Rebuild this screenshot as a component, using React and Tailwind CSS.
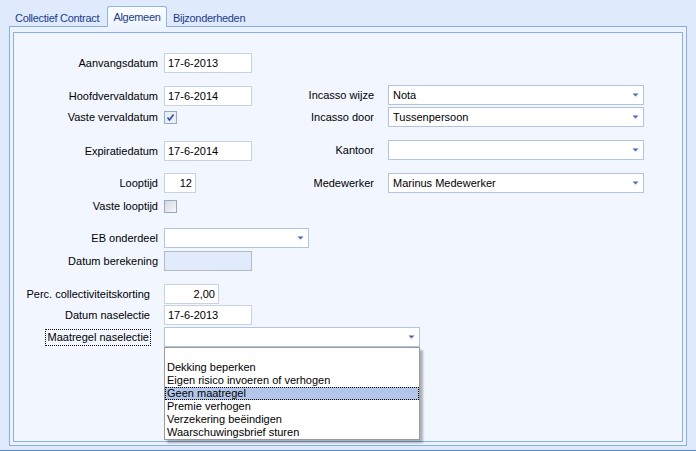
import React from "react";

const Arrow = () => (
  <svg width="7" height="5" viewBox="0 0 7 5" className="absolute right-[4px] top-1/2 -translate-y-1/2">
    <path d="M0.5 1 H6.5 L3.5 4 Z" fill="#4a6bb4" />
    <path d="M2 4.5 H5" stroke="#e6d6f0" strokeWidth="1" />
  </svg>
);

const TextBox = ({ value = "", w = "w-[88px]", right = false, disabled = false }) => (
  <div
    className={`${w} h-[20px] flex items-center px-[3px] border ${
      disabled ? "bg-[#e1ebfb] border-[#b3bac6]" : "bg-white border-[#c6d3e3]"
    } ${right ? "justify-end" : ""}`}
  >
    {value}
  </div>
);

const Combo = ({ value = "", w = "w-[256px]", children }) => (
  <div className={`${w} h-[20px] relative flex items-center pl-[4px] bg-white border border-[#b2c5de]`}>
    {value}
    <Arrow />
    {children}
  </div>
);

const Check = ({ checked }) => (
  <div
    className={`w-[13px] h-[13px] border border-[#95abc9] ${
      checked ? "bg-[#e9eef6]" : "bg-gradient-to-br from-[#d4d8de] to-[#f7f8fa]"
    } flex items-center justify-center`}
  >
    {checked && (
      <svg width="9" height="9" viewBox="0 0 9 9">
        <path d="M1.5 4.5 L3.5 7 L7.5 1.5" fill="none" stroke="#2f4f9e" strokeWidth="1.6" />
      </svg>
    )}
  </div>
);

const Row = ({ label, children, labelW = "w-[144px]", pr = "", gap = "ml-[6px]", mt = "" }) => (
  <div className={`flex items-center h-[20px] ${mt}`}>
    <div className={`${labelW} ${pr} text-right whitespace-nowrap shrink-0`}>{label}</div>
    <div className={gap}>{children}</div>
  </div>
);

const RightRow = ({ label, value, mt = "" }) => (
  <Row label={label} labelW="w-[74px]" gap="ml-[14px]" mt={mt}>
    <Combo value={value} w="w-[256px]" />
  </Row>
);

const options = [
  "",
  "Dekking beperken",
  "Eigen risico invoeren of verhogen",
  "Geen maatregel",
  "Premie verhogen",
  "Verzekering beëindigen",
  "Waarschuwingsbrief sturen",
];

export default function App() {
  return (
    <div className="w-[696px] h-[451px] bg-[#dfeafc] text-[11px] text-black font-[Liberation_Sans,Arial,sans-serif] overflow-hidden flex flex-col">
      {/* tabs */}
      <div className="h-[26px] flex items-end pl-[11px] text-[#1d3b8c] tracking-[-0.3px] shrink-0">
        <div className="w-[96px] h-[20px] pl-[4px] pt-[4px] whitespace-nowrap">Collectief Contract</div>
        <div className="relative z-10 w-[60px] h-[21px] -mb-[1px] border border-b-0 border-[#92b4e2] rounded-t-[3px] bg-gradient-to-b from-[#fbfdff] to-[#eef5ff] flex justify-center pt-[2px] whitespace-nowrap">
          Algemeen
        </div>
        <div className="h-[20px] pl-[6px] pt-[4px] whitespace-nowrap">Bijzonderheden</div>
      </div>

      {/* frame */}
      <div className="ml-[9px] w-[678px] h-[420px] border border-[#88aee2] bg-[#ecf3fe] pt-[5px] px-[3px] pb-[3px] shrink-0">
        <div className="relative h-full border border-[#88aee2] bg-[#f1f6ff] pt-[20px]">
          <div className="flex">
            {/* left column */}
            <div className="w-[286px] shrink-0">
              <Row label="Aanvangsdatum">
                <TextBox value="17-6-2013" />
              </Row>
              <Row label="Hoofdvervaldatum" mt="mt-[13px]">
                <TextBox value="17-6-2014" />
              </Row>
              <Row label="Vaste vervaldatum" mt="mt-[1px]">
                <Check checked />
              </Row>
              <Row label="Expiratiedatum" mt="mt-[14px]">
                <TextBox value="17-6-2014" />
              </Row>
              <Row label="Looptijd" mt="mt-[12px]">
                <TextBox value="12" w="w-[32px]" right />
              </Row>
              <Row label="Vaste looptijd" mt="mt-[3px]">
                <Check />
              </Row>
            </div>
            {/* right column */}
            <div className="mt-[32px]">
              <RightRow label="Incasso wijze" value="Nota" />
              <RightRow label="Incasso door" value="Tussenpersoon" mt="mt-[2px]" />
              <RightRow label="Kantoor" value="" mt="mt-[13px]" />
              <RightRow label="Medewerker" value="Marinus Medewerker" mt="mt-[13px]" />
            </div>
          </div>

          <Row label="EB onderdeel" mt="mt-[12px]">
            <Combo w="w-[145px]" />
          </Row>
          <Row label="Datum berekening" mt="mt-[3px]">
            <TextBox disabled />
          </Row>
          <Row label="Perc. collectiviteitskorting" pr="pr-[8px]" mt="mt-[13px]">
            <TextBox value="2,00" w="w-[55px]" right />
          </Row>
          <Row label="Datum naselectie" pr="pr-[8px]" mt="mt-[1px]">
            <TextBox value="17-6-2013" />
          </Row>
          <div className="flex items-center h-[20px] mt-[2px]">
            <div className="w-[144px] pr-[7px] flex justify-end shrink-0">
              <span className="border border-dotted border-black px-[1px] leading-[15px] whitespace-nowrap">
                Maatregel naselectie
              </span>
            </div>
            <div className="ml-[6px]">
              <Combo w="w-[256px]">
                <div className="absolute left-[-1px] top-[19px] w-[256px] z-20 bg-white border border-[#9a9a9a] shadow-[3px_3px_2px_rgba(0,0,0,0.28)]">
                  {options.map((o, i) => (
                    <div
                      key={i}
                      className={`h-[13px] leading-[13px] pl-[2px] whitespace-nowrap ${
                        o === "Geen maatregel" ? "bg-[#b2c6ea] outline outline-1 outline-dotted outline-black -outline-offset-1" : ""
                      }`}
                    >
                      {o}
                    </div>
                  ))}
                </div>
              </Combo>
            </div>
          </div>
        </div>
      </div>

      <div className="mt-auto h-[1px] bg-[#5b87c6] shrink-0" />
    </div>
  );
}
